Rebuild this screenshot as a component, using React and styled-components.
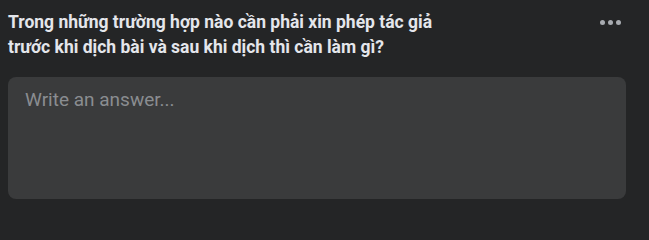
import React from 'react';
import styled, { createGlobalStyle } from 'styled-components';

const GlobalStyle = createGlobalStyle`
  html, body {
    margin: 0;
    background: #242526;
  }
  body {
    font-family: Roboto, "Liberation Sans", sans-serif;
  }
`;

const Card = styled.div`
  display: flex;
  flex-direction: column;
  padding: 10px 23px 0 8px;
`;

const Header = styled.div`
  display: flex;
  justify-content: space-between;
  align-items: flex-start;
`;

const Title = styled.h2`
  margin: 0;
  max-width: 440px;
  font-size: 17.5px;
  line-height: 25px;
  font-weight: 700;
  color: #e4e6eb;
`;

const MenuButton = styled.button`
  display: flex;
  align-items: center;
  gap: 3px;
  margin: 10px 5px 0 0;
  padding: 0;
  border: 0;
  background: transparent;
  cursor: pointer;
`;

const Dot = styled.span`
  width: 5px;
  height: 5px;
  border-radius: 50%;
  background: #a8abb0;
`;

const Answer = styled.textarea`
  box-sizing: border-box;
  margin-top: 17px;
  width: 100%;
  height: 122px;
  padding: 12px 17px;
  border: 0;
  border-radius: 8px;
  outline: none;
  resize: none;
  background: #3a3b3c;
  color: #e4e6eb;
  font-family: Roboto, "Liberation Sans", sans-serif;
  font-size: 19px;
  line-height: 22px;

  &::placeholder {
    color: #8a8d91;
  }
`;

export default function App() {
  return (
    <>
      <GlobalStyle />
      <Card>
        <Header>
          <Title>
            Trong những trường hợp nào cần phải xin phép tác giả trước khi dịch bài và sau khi dịch thì cần làm gì?
          </Title>
          <MenuButton aria-label="More">
            <Dot />
            <Dot />
            <Dot />
          </MenuButton>
        </Header>
        <Answer placeholder="Write an answer..." />
      </Card>
    </>
  );
}
